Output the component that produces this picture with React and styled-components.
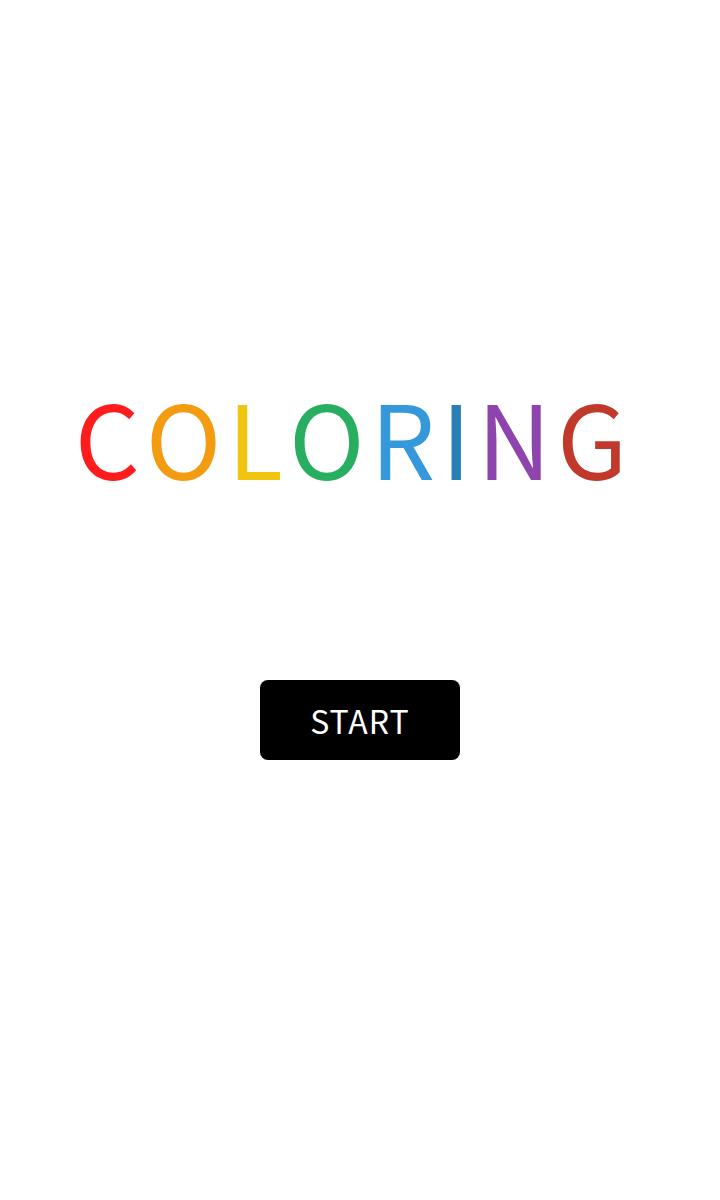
import React from "react";
import styled, { createGlobalStyle } from "styled-components";

const Global = createGlobalStyle`
  html, body { margin: 0; padding: 0; background: #ffffff; }
  body { font-family: "Noto Sans CJK JP", "Noto Sans", sans-serif; }
`;

const Page = styled.main`
  min-height: 1200px;
  display: flex;
  flex-direction: column;
  align-items: center;
  padding-top: 385px;
  box-sizing: border-box;
`;

const Title = styled.h1`
  margin: 0;
  display: flex;
  font-family: "Noto Sans CJK JP", "Noto Sans", sans-serif;
  font-weight: 400;
  font-size: 102px;
  line-height: 1;
  letter-spacing: 6px;
  padding-right: 12px;
`;

const Letter = styled.span`
  color: ${(p) => p.$color};
`;

const StartButton = styled.button`
  margin-top: 193px;
  width: 200px;
  height: 80px;
  border: none;
  border-radius: 8px;
  background: #000000;
  color: #ffffff;
  font-family: "Noto Sans CJK JP", "Noto Sans", sans-serif;
  font-size: 32px;
  font-weight: 400;
  letter-spacing: 1px;
  cursor: pointer;
  display: flex;
  align-items: center;
  justify-content: center;
  padding: 0;
`;

const letters = [
  ["C", "#ff1c1c"],
  ["O", "#f39c12"],
  ["L", "#f1c40f"],
  ["O", "#27ae60"],
  ["R", "#3498db"],
  ["I", "#2980b9"],
  ["N", "#8e44ad"],
  ["G", "#c0392b"],
];

export default function App() {
  return (
    <>
      <Global />
      <Page>
        <Title>
          {letters.map(([ch, c], i) => (
            <Letter key={i} $color={c}>
              {ch}
            </Letter>
          ))}
        </Title>
        <StartButton>START</StartButton>
      </Page>
    </>
  );
}
